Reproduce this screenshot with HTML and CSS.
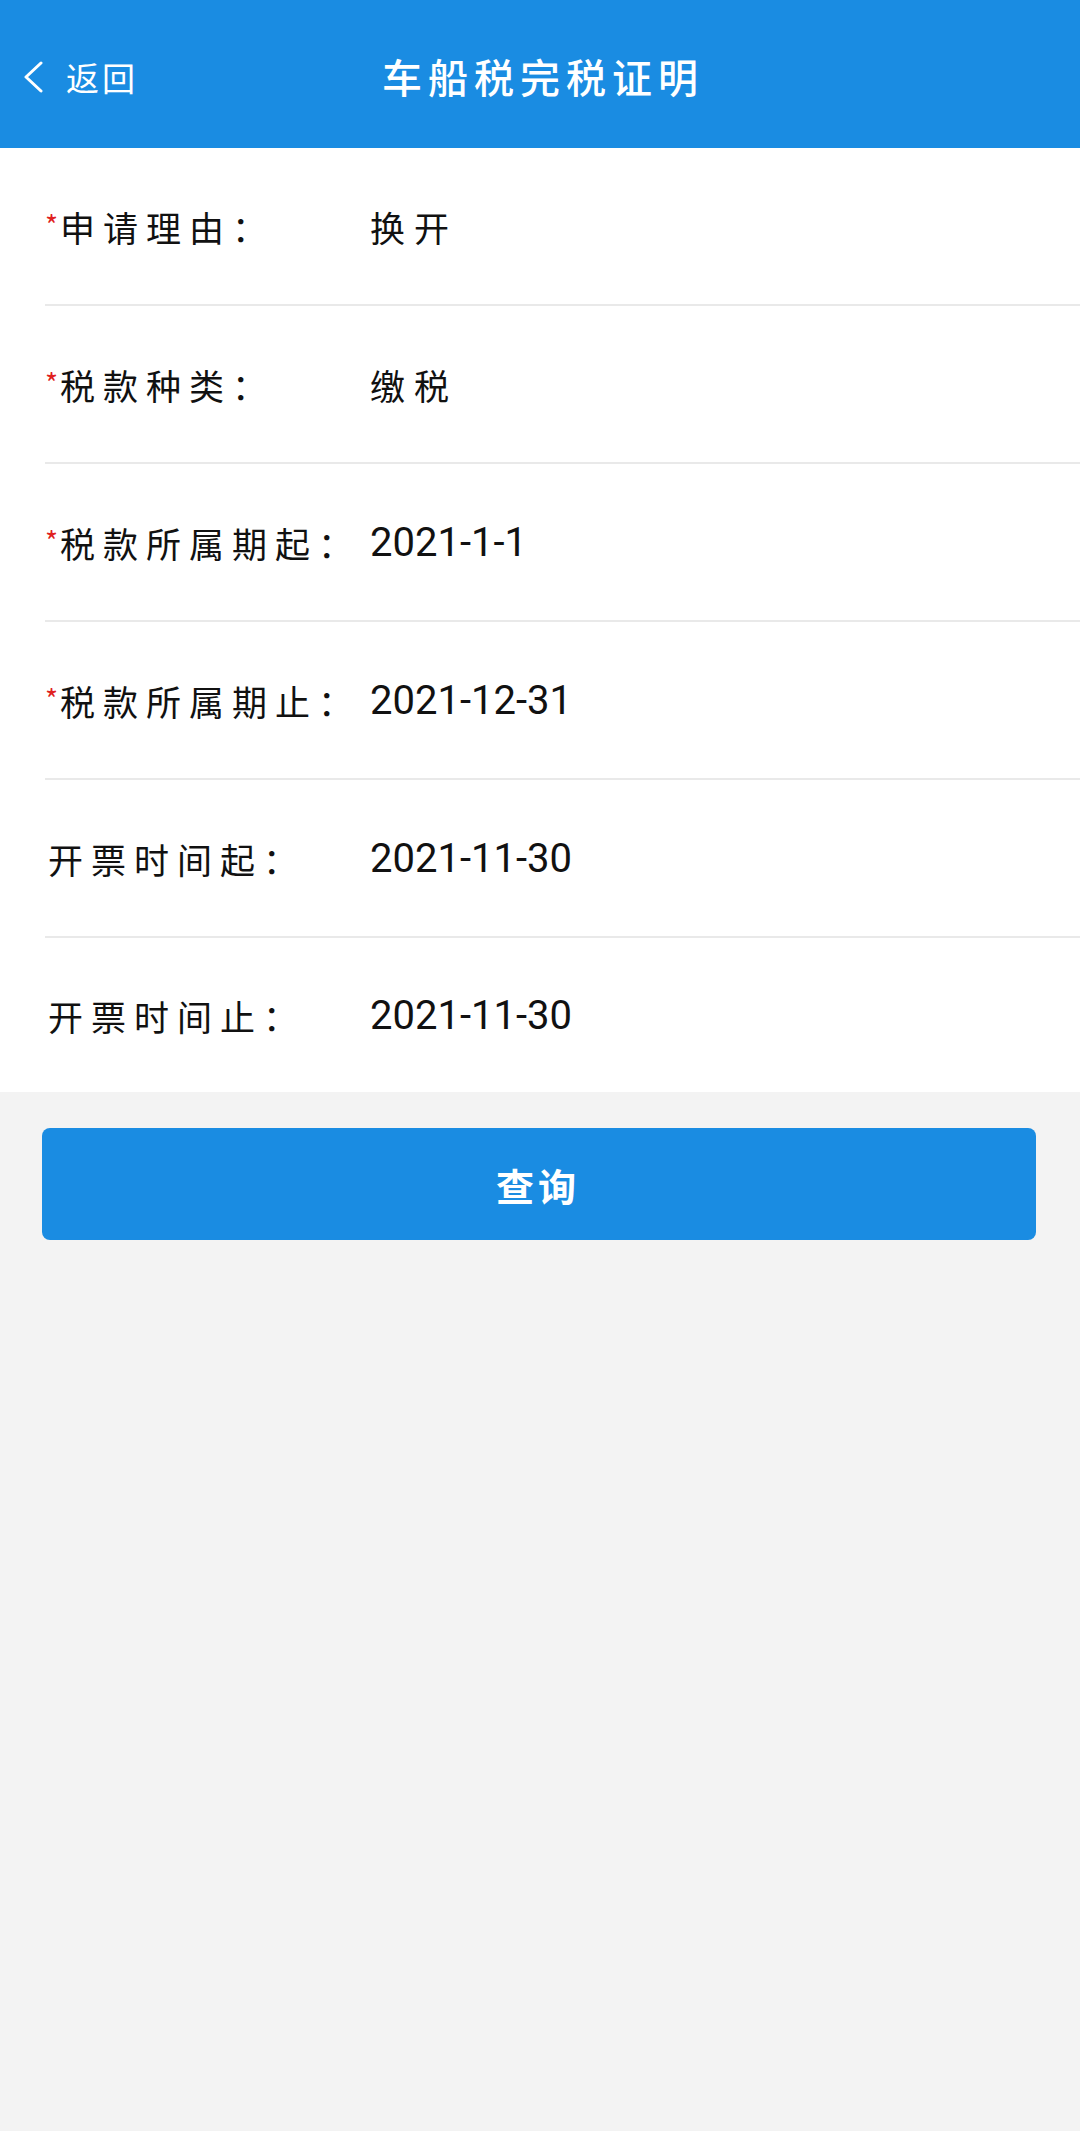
FILE: index.html
```html
<!DOCTYPE html>
<html lang="zh-CN">
<head>
    <meta charset="UTF-8">
    <meta name="viewport" content="width=device-width, initial-scale=1.0">
    <title>车船税完税证明</title>
    <link rel="stylesheet" href="styles.css">
</head>
<body>
    <header class="topbar">
        <a class="back" href="#">
            <svg class="back-icon" width="22" height="32" viewBox="0 0 22 32">
                <polyline points="19,2 4,16 19,30" fill="none" stroke="#fff" stroke-width="3" stroke-linecap="round" stroke-linejoin="round"/>
            </svg>
            <span>返回</span>
        </a>
        <h1 class="title">车船税完税证明</h1>
        <div></div>
    </header>

    <div class="form-list">
        <div class="row">
            <span class="label"><i class="req">*</i>申请理由：</span>
            <span class="value cn">换开</span>
        </div>
        <div class="row">
            <span class="label"><i class="req">*</i>税款种类：</span>
            <span class="value cn">缴税</span>
        </div>
        <div class="row">
            <span class="label"><i class="req">*</i>税款所属期起：</span>
            <span class="value">2021-1-1</span>
        </div>
        <div class="row">
            <span class="label"><i class="req">*</i>税款所属期止：</span>
            <span class="value">2021-12-31</span>
        </div>
        <div class="row">
            <span class="label plain">开票时间起：</span>
            <span class="value">2021-11-30</span>
        </div>
        <div class="row">
            <span class="label plain">开票时间止：</span>
            <span class="value">2021-11-30</span>
        </div>
    </div>

    <button type="button" class="submit-btn">查询</button>
</body>
</html>
```

FILE: styles.css
```css
body {
    font-family: "Noto Sans CJK SC", "Noto Sans", sans-serif;
    background-color: #f3f3f3;
    color: #111;
    margin: 0;
    padding: 0;
    min-height: 100vh;
}
.topbar {
    height: 148px;
    background-color: #1a8ce2;
    color: #fff;
    display: grid;
    grid-template-columns: 1fr auto 1fr;
    align-items: center;
}
.back {
    display: flex;
    align-items: center;
    gap: 22px;
    padding-left: 22px;
    color: #fff;
    text-decoration: none;
    font-size: 33px;
    letter-spacing: 3px;
    margin-top: 6px;
}
.title {
    margin: 4px 0 0;
    font-size: 40px;
    font-weight: 500;
    letter-spacing: 6px;
    padding-left: 6px;
}
.form-list {
    background-color: #fff;
}
.row {
    height: 158px;
    margin-left: 45px;
    box-sizing: border-box;
    border-bottom: 2px solid #e9e9e9;
    display: flex;
    align-items: center;
}
.row:last-child {
    height: 154px;
    border-bottom: none;
}
.label {
    width: 325px;
    flex-shrink: 0;
    font-size: 35px;
    letter-spacing: 8px;
    white-space: nowrap;
}
.label.plain {
    padding-left: 3px;
    width: 322px;
}
.req {
    font-style: normal;
    color: #e02020;
    font-size: 28px;
    letter-spacing: 0;
    margin-right: 2px;
    vertical-align: 6px;
}
.value {
    font-family: Roboto, "Noto Sans", sans-serif;
    font-size: 40px;
}
.value.cn {
    font-family: "Noto Sans CJK SC", sans-serif;
    font-size: 35px;
    letter-spacing: 9px;
}
.submit-btn {
    display: block;
    width: calc(100% - 86px);
    margin: 36px 44px 0 42px;
    height: 112px;
    background-color: #1a8ce2;
    color: #fff;
    border: none;
    border-radius: 8px;
    font-family: "Noto Sans CJK SC", sans-serif;
    font-size: 38px;
    font-weight: 700;
    letter-spacing: 4px;
    padding-left: 4px;
    cursor: pointer;
}
```
